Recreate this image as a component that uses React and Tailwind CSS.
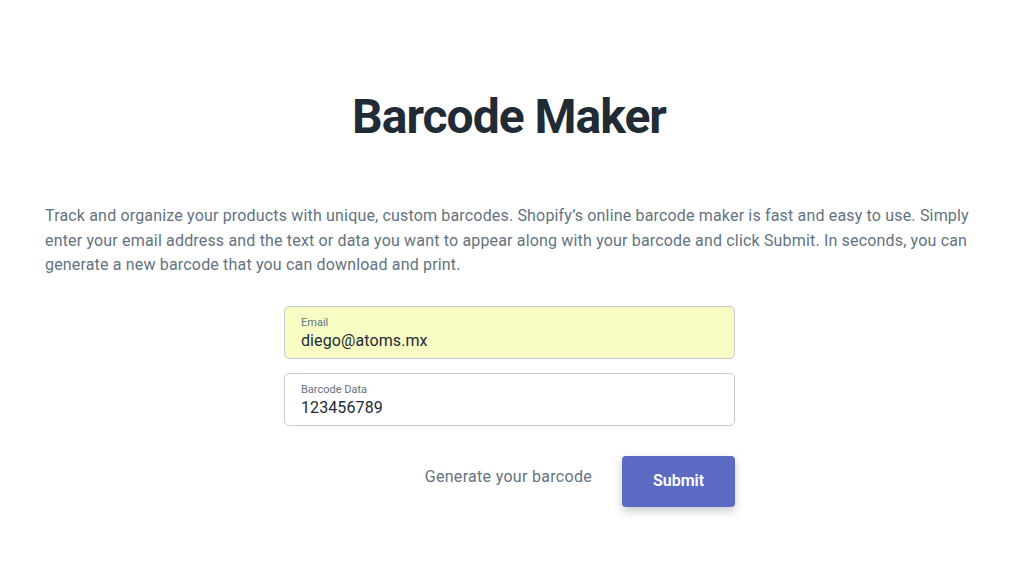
import React from "react";

const Field = ({ label, value, filled }) => (
  <div
    className={`h-[53px] w-full rounded-[5px] border border-[#c4cdd5] px-4 pt-[9px] ${
      filled ? "bg-[#f8fbc2]" : "bg-white"
    }`}
  >
    <div className="text-[11px] leading-[14px] text-[#637381]">{label}</div>
    <div className="text-[16px] leading-[22px] tracking-[0.1px] text-[#212b36]">{value}</div>
  </div>
);

export default function App() {
  return (
    <div className="min-h-[577px] w-full bg-white font-['Roboto',sans-serif]">
      <h1 className="pt-[89px] text-center text-[48px] font-bold leading-[56px] tracking-[-1px] text-[#212b36]">
        Barcode Maker
      </h1>

      <p className="mt-[59px] px-[45px] text-[16px] leading-[24.5px] tracking-[0.17px] text-[#637381]">
        Track and organize your products with unique, custom barcodes. Shopify’s online barcode maker is fast and easy to use. Simply
        enter your email address and the text or data you want to appear along with your barcode and click Submit. In seconds, you can
        generate a new barcode that you can download and print.
      </p>

      <form className="mx-auto mt-[28px] flex w-[452px] flex-col gap-[14px] pl-[1px]">
        <Field label="Email" value="diego@atoms.mx" filled />
        <Field label="Barcode Data" value="123456789" />
        <div className="mt-[16px] flex items-center justify-end gap-[30px]">
          <span className="-mt-[8px] text-[16px] tracking-[0.3px] text-[#637381]">Generate your barcode</span>
          <button
            type="button"
            className="h-[51px] w-[113px] rounded-[4px] bg-[#5c6ac4] text-[16px] font-semibold text-white shadow-[0_4px_10px_rgba(33,43,54,0.25)]"
          >
            Submit
          </button>
        </div>
      </form>
    </div>
  );
}
